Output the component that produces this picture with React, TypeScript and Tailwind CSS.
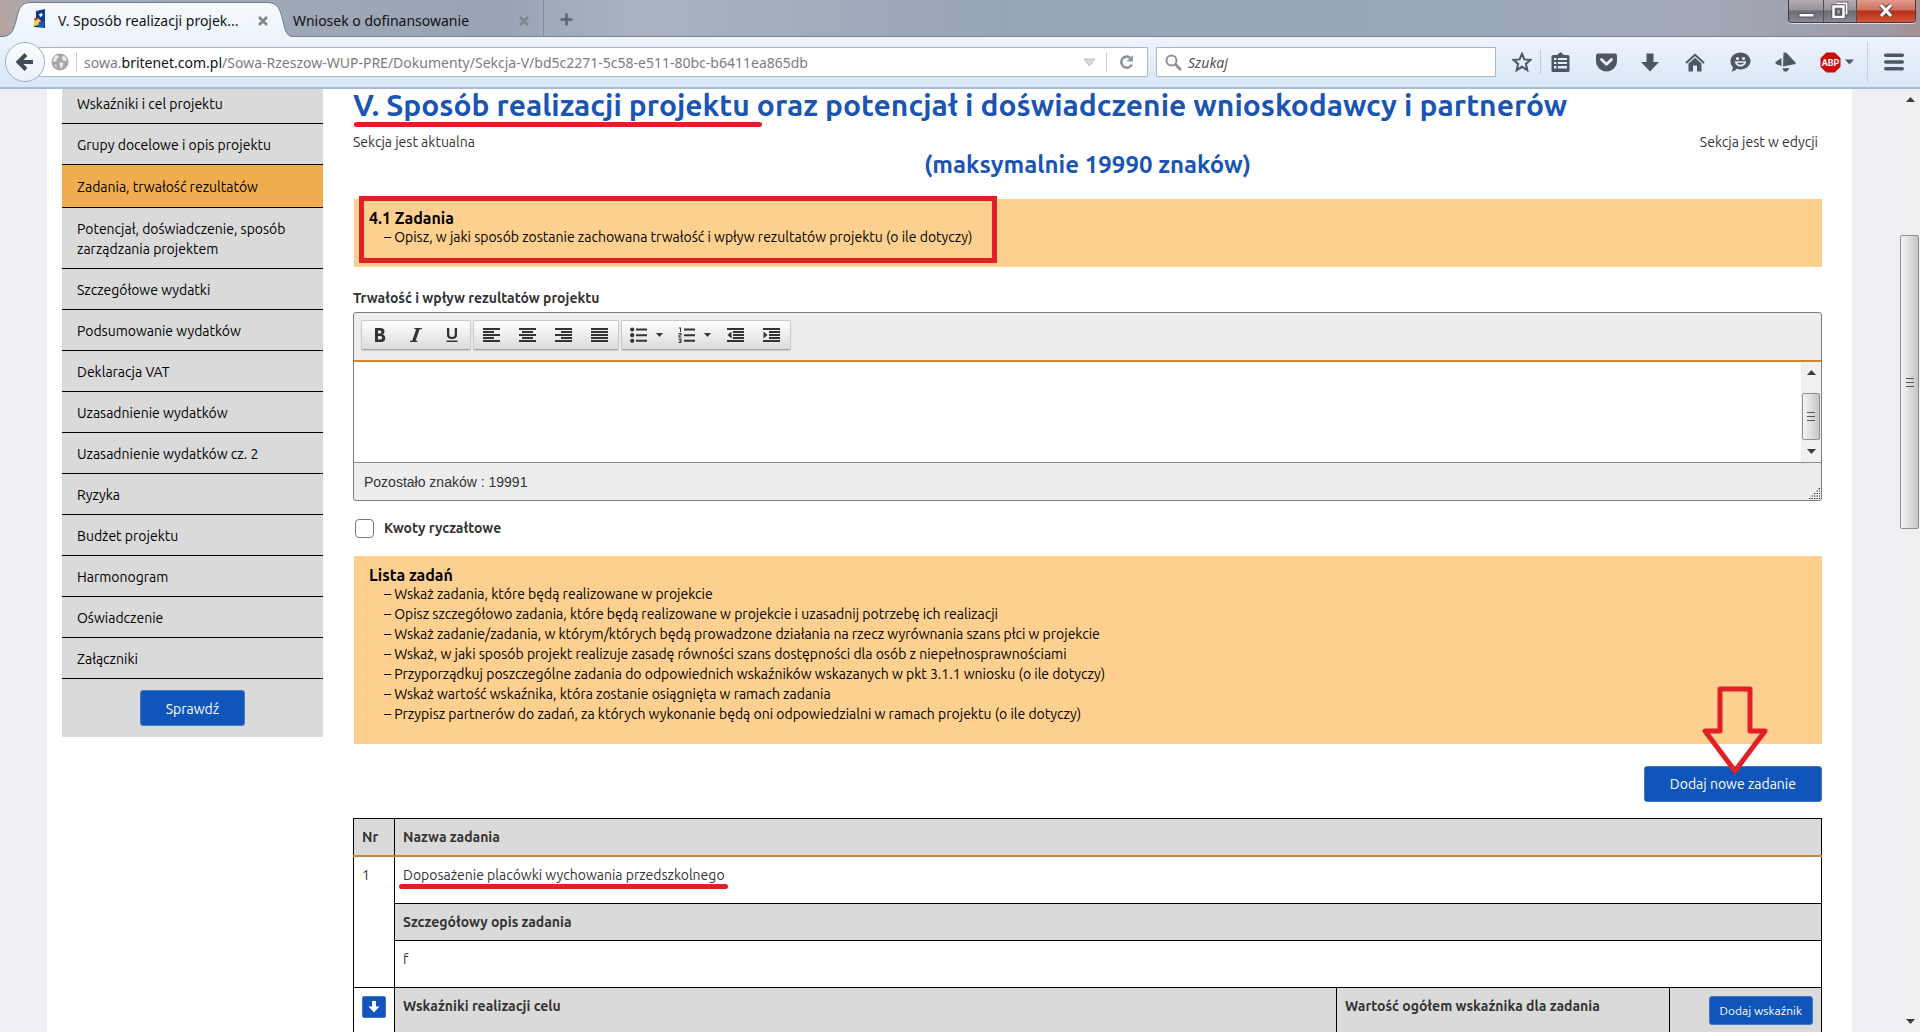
import { ReactNode } from "react";
import clsx from "clsx";

const menuItems = [
    "Wskaźniki i cel projektu",
    "Grupy docelowe i opis projektu",
    "Zadania, trwałość rezultatów",
    "Potencjał, doświadczenie, sposób zarządzania projektem",
    "Szczegółowe wydatki",
    "Podsumowanie wydatków",
    "Deklaracja VAT",
    "Uzasadnienie wydatków",
    "Uzasadnienie wydatków cz. 2",
    "Ryzyka",
    "Budżet projektu",
    "Harmonogram",
    "Oświadczenie",
    "Załączniki",
];
const activeItem = "Zadania, trwałość rezultatów";

const taskHints = [
    "Wskaż zadania, które będą realizowane w projekcie",
    "Opisz szczegółowo zadania, które będą realizowane w projekcie i uzasadnij potrzebę ich realizacji",
    "Wskaż zadanie/zadania, w którym/których będą prowadzone działania na rzecz wyrównania szans płci w projekcie",
    "Wskaż, w jaki sposób projekt realizuje zasadę równości szans dostępności dla osób z niepełnosprawnościami",
    "Przyporządkuj poszczególne zadania do odpowiednich wskaźników wskazanych w pkt 3.1.1 wniosku (o ile dotyczy)",
    "Wskaż wartość wskaźnika, która zostanie osiągnięta w ramach zadania",
    "Przypisz partnerów do zadań, za których wykonanie będą oni odpowiedzialni w ramach projektu (o ile dotyczy)",
];

/* ---------- przeglądarka ---------- */

function CloseIcon() {
    return (
        <svg width="10" height="10" viewBox="0 0 10 10" fill="none" stroke="#7d858e" strokeWidth="2.6">
            <path d="M1 1l8 8M9 1l-8 8" />
        </svg>
    );
}

function TabStrip() {
    return (
        <div className="flex h-[37px] bg-[linear-gradient(90deg,#b5a3a0_0,#a3abb9_60px,#98a4b6_500px,#a9b3c0_640px,#98a5b8_1000px,#9ba8ba_1500px,#a2aab8_88%,#9d9ba4_98%,#a58f91_100%)] shadow-[inset_0_-1px_0_#76829a]">
            <div className="relative flex w-[293px] items-center pl-[33px]">
                <svg className="absolute left-0 top-0" width="293" height="37" viewBox="0 0 293 37">
                    <defs>
                        <linearGradient id="tab" x1="0" y1="0" x2="0" y2="1">
                            <stop offset="0" stopColor="#f7fafe" />
                            <stop offset="1" stopColor="#edf4fc" />
                        </linearGradient>
                    </defs>
                    <path d="M0 37C11 37 13 32 16 21C19 9 20 2.500 31 2.500H267C278 2.500 280 9 283 21C285 31 287 36.500 293 36.500V37Z" fill="url(#tab)" />
                    <path d="M0 36.500C11 36.500 13 32 16 21C19 9 20 2.500 31 2.500H267C278 2.500 280 9 283 21C285 31 287 36.500 293 36.500" fill="none" stroke="#6d7a8f" />
                </svg>
                <svg className="relative" width="13" height="20" viewBox="0 0 13 20">
                    <path d="M3 2L12 0V19L1 18V11L3 10Z" fill="#14398c" />
                    <path d="M6 5L9 4L9.500 7L7 8Z" fill="#fff" />
                    <path d="M1 11L5 9L8 12L6 16L1 17Z" fill="#f2d23c" />
                    <path d="M1 9L6 9L2.500 12Z" fill="#d4273e" />
                    <path d="M6 13L11 12V18L5 18Z" fill="#1e56b8" />
                </svg>
                <span className="relative ml-3 w-[190px] truncate pt-1 text-sm leading-5 text-[#111]">V. Sposób realizacji projek...</span>
                <button aria-label="Zamknij kartę" className="relative ml-[10px] pt-1"><CloseIcon /></button>
            </div>
            <div className="flex w-[251px] items-center border-r border-[#818b9b] pt-1">
                <span className="w-[226px] text-sm leading-5 text-[#111]">Wniosek o dofinansowanie</span>
                <button aria-label="Zamknij kartę"><CloseIcon /></button>
            </div>
            <button aria-label="Nowa karta" className="ml-4 pt-[2px]">
                <svg width="13" height="13" viewBox="0 0 13 13" stroke="#5b6572" strokeWidth="2.600"><path d="M6.500 0.500v12M0.500 6.500h12" /></svg>
            </button>
            <div className="mr-1 ml-auto flex h-[23px] overflow-hidden rounded-b-[4px] border border-t-0 border-[#3a3d45] shadow-[0_1px_0_#d7dbe2]">
                <button aria-label="Minimalizuj" className="flex w-[35px] justify-center border-r border-[#4d4f57] bg-[linear-gradient(#b3acb1_0%,#97929a_45%,#6b6971_50%,#8b8891_100%)]">
                    <svg width="17" height="22" viewBox="0 0 17 22"><rect x="1" y="13.500" width="15" height="3.500" fill="#fff" stroke="#52555e" /></svg>
                </button>
                <button aria-label="Przywróć" className="flex w-[33px] justify-center border-r border-[#4d4f57] bg-[linear-gradient(#b3acb1_0%,#97929a_45%,#6b6971_50%,#8b8891_100%)]">
                    <svg width="20" height="22" viewBox="0 0 20 22" fill="none">
                        <path d="M7 3.500h9.500v10H14" stroke="#45484f" strokeWidth="3.500" />
                        <path d="M7 3.500h9.500v10H14" stroke="#fff" strokeWidth="2" />
                        <rect x="3.500" y="6.500" width="10" height="10.500" stroke="#45484f" strokeWidth="4" />
                        <rect x="3.500" y="6.500" width="10" height="10.500" stroke="#fff" strokeWidth="2.500" />
                        <rect x="6.500" y="9.500" width="4" height="4.500" fill="#9c9aa2" stroke="#55575f" />
                    </svg>
                </button>
                <button aria-label="Zamknij" className="flex w-[58px] justify-center bg-[linear-gradient(#e09a8c_0%,#d2705f_45%,#b8301a_50%,#d4523a_100%)]">
                    <svg width="18" height="22" viewBox="0 0 18 22" fill="none">
                        <path d="M4 5l10 11M14 5L4 16" stroke="#5f3a36" strokeWidth="5" />
                        <path d="M4 5l10 11M14 5L4 16" stroke="#fff" strokeWidth="3.200" />
                    </svg>
                </button>
            </div>
        </div>
    );
}

function ToolButton({ label, className, children }: { label: string; className?: string; children: ReactNode }) {
    return (
        <button aria-label={label} className={clsx("flex h-6 items-center justify-center text-[#4c5763]", className)}>
            {children}
        </button>
    );
}

function NavBar() {
    return (
        <div className="flex h-[52px] items-center border-b-2 border-[#a9bbd2] bg-linear-to-b from-[#edf4fc] to-[#d9e7f6]">
            <button aria-label="Wstecz" className="relative z-10 ml-[5px] flex size-10 items-center justify-center rounded-full border border-[#9fb0c6] bg-linear-to-b from-[#fbfdff] to-[#e9f1fa]">
                <svg width="20" height="20" viewBox="0 0 20 20" fill="none" stroke="#414b57" strokeWidth="4">
                    <path d="M18 10H5M11 2.500L3.500 10L11 17.500" />
                </svg>
            </button>
            <div className="-ml-[6px] flex h-[30px] w-[1109px] shrink items-center border border-[#a9b8cb] bg-white">
                <svg className="ml-[11px] shrink-0" width="18" height="18" viewBox="0 0 18 18">
                    <circle cx="9" cy="9" r="8.500" fill="#a5a7aa" />
                    <path d="M4 3C6 1.500 8 2 7.500 4S5 5 5.500 7S3 9 1.500 8Z" fill="#e9eaec" />
                    <path d="M12 2.500C14 3 15.500 5.500 16 7.500L12.500 8L11 5Z" fill="#e9eaec" />
                    <path d="M8.500 10C10 8.500 12 9.500 12.500 11L10.500 15.500L9 14Z" fill="#e9eaec" />
                    <path d="M3 11.500L5.500 12L5.500 14.500Z" fill="#e9eaec" />
                </svg>
                <div className="ml-[7px] h-5 w-px bg-[#c9ccd1]" />
                <a href="#adres" className="ml-[7px] flex-1 pt-[2px] text-sm leading-5 whitespace-nowrap text-[#7c7c7c]">
                    sowa.<span className="text-[#111]">britenet.com.pl</span>/Sowa-Rzeszow-WUP-PRE/Dokumenty/Sekcja-V/bd5c2271-5c58-e511-80bc-b6411ea865db
                </a>
                <button aria-label="Historia adresów" className="mr-[10px]">
                    <svg width="13" height="9" viewBox="0 0 13 9"><path d="M1 1h11L6.500 8Z" fill="#d7d9dc" stroke="#b9bcc0" /></svg>
                </button>
                <div className="h-5 w-px bg-[#c9ccd1]" />
                <button aria-label="Odśwież" className="mx-3">
                    <svg width="16" height="16" viewBox="0 0 16 16" fill="none" stroke="#8f959b" strokeWidth="2.600">
                        <path d="M12.800 10.500A5.500 5.500 0 1 1 11.500 4" />
                        <path d="M14 1v6.500H7.500Z" fill="#8f959b" stroke="none" />
                    </svg>
                </button>
            </div>
            <label className="ml-2 flex h-[30px] w-[340px] items-center border border-[#a9b8cb] bg-white">
                <svg className="mr-[6px] ml-2 shrink-0" width="17" height="17" viewBox="0 0 17 17" fill="none" stroke="#8d9299" strokeWidth="2">
                    <circle cx="6.500" cy="6.500" r="5" />
                    <path d="M10 10l6 6" strokeWidth="3" />
                </svg>
                <input aria-label="Szukaj" placeholder="Szukaj" className="min-w-0 flex-1 pt-[2px] text-sm italic outline-none placeholder:text-[#555]" />
            </label>
            <div className="ml-auto flex shrink-0 items-center">
                <ToolButton label="Dodaj zakładkę" className="mr-2 w-5">
                    <svg width="20" height="20" viewBox="0 0 20 20" fill="none" stroke="currentColor" strokeWidth="2">
                        <path d="M10 1.800L12.400 7.400L18.500 7.900L13.900 11.900L15.300 18.200L10 14.800L4.700 18.200L6.100 11.900L1.500 7.900L7.600 7.400Z" />
                    </svg>
                </ToolButton>
                <div className="h-6 w-px bg-[#bcc8d6]" />
                <ToolButton label="Zakładki" className="mr-[26px] ml-[9px] w-5">
                    <svg width="19" height="20" viewBox="0 0 19 20" fill="currentColor">
                        <path fillRule="evenodd" d="M6 3L9.500 0L13 3H17Q18.500 3 18.500 4.500V18.500Q18.500 20 17 20H2Q0.500 20 0.500 18.500V4.500Q0.500 3 2 3ZM3 6v2h2.500v-2ZM7 6v2h9v-2ZM3 10v2h2.500v-2ZM7 10v2h9v-2ZM3 14v2.500h2.500V14ZM7 14v2.500h9V14Z" />
                    </svg>
                </ToolButton>
                <ToolButton label="Pocket" className="mr-6 w-[21px]">
                    <svg width="21" height="19" viewBox="0 0 21 19">
                        <path d="M2 0.500H19Q21 0.500 21 2.500V8.500A10.500 10 0 0 1 0 8.500V2.500Q0 0.500 2 0.500Z" fill="currentColor" />
                        <path d="M5.500 6.500L10.500 11.300L15.500 6.500" fill="none" stroke="#eaf1f9" strokeWidth="2.800" strokeLinecap="round" strokeLinejoin="round" />
                    </svg>
                </ToolButton>
                <ToolButton label="Pobrane" className="mr-[26px] w-[18px]">
                    <svg width="18" height="19" viewBox="0 0 18 19" fill="currentColor"><path d="M5.500 0.500H12.500V9H18L9 18.500L0 9H5.500Z" /></svg>
                </ToolButton>
                <ToolButton label="Strona startowa" className="mr-[25px] w-5">
                    <svg width="20" height="19" viewBox="0 0 20 19">
                        <path d="M1 10L10 1.800L19 10" fill="none" stroke="currentColor" strokeWidth="2" />
                        <path d="M3.500 10.500L10 4.700L16.500 10.500V18.500H12V12.500H8V18.500H3.500Z" fill="currentColor" />
                    </svg>
                </ToolButton>
                <ToolButton label="Hello" className="mr-[23px] w-[21px]">
                    <svg width="21" height="20" viewBox="0 0 21 20">
                        <path d="M10.500 0.500C16 0.500 20.500 4.200 20.500 9S16 17.500 10.500 17.500C9 17.500 7.500 17.200 6.500 16.800C5.500 18.500 3.500 19.500 1.500 19.500C2.500 18 2.800 16.500 2.800 15C1.200 13.500 0.500 11.400 0.500 9C0.500 4.200 5 0.500 10.500 0.500Z" fill="currentColor" />
                        <circle cx="7.500" cy="6.500" r="1.600" fill="#eaf1f9" />
                        <circle cx="13.500" cy="6.500" r="1.600" fill="#eaf1f9" />
                        <path d="M4.800 9.300H16.200C15.500 13 13.300 14.500 10.500 14.500S5.500 13 4.800 9.300Z" fill="#eaf1f9" />
                        <path d="M7 10.800H14C13.200 12.300 12 12.600 10.500 12.600S7.800 12.300 7 10.800Z" fill="currentColor" />
                    </svg>
                </ToolButton>
                <ToolButton label="Dodatek" className="mr-6 w-[22px]">
                    <svg width="21" height="20" viewBox="0 0 21 20" fill="currentColor">
                        <path d="M8.500 0.500Q10.500 0 12 1.500L20.500 10.500V12L8 14.500Z" />
                        <path d="M6.500 6V14L2 12.500Q0 11.500 0.500 10Z" />
                        <path d="M7 16.500L14.500 16L12.500 19Q10.500 20.500 9 19Z" />
                    </svg>
                </ToolButton>
                <ToolButton label="Adblock Plus" className="mr-[13px] w-[34px] gap-1">
                    <svg width="21" height="21" viewBox="0 0 21 21">
                        <path d="M6.300 0.500H14.700L20.500 6.300V14.700L14.700 20.500H6.300L0.500 14.700V6.300Z" fill="#cf0a0a" />
                        <text x="10.500" y="14" textAnchor="middle" fontSize="9" fontWeight="700" fill="#fff" fontFamily="Roboto, sans-serif">ABP</text>
                    </svg>
                    <svg width="9" height="6" viewBox="0 0 9 6" fill="currentColor"><path d="M0 0.500h9L4.500 5.500Z" /></svg>
                </ToolButton>
                <div className="h-10 w-px bg-[#c5d2e2]" />
                <ToolButton label="Menu" className="mr-4 ml-4 w-5">
                    <svg width="20" height="18" viewBox="0 0 20 18" fill="currentColor">
                        <rect y="0.500" width="20" height="3.400" rx="1.700" />
                        <rect y="7.300" width="20" height="3.400" rx="1.700" />
                        <rect y="14.100" width="20" height="3.400" rx="1.700" />
                    </svg>
                </ToolButton>
            </div>
        </div>
    );
}

function ScrollArrow({ down }: { down?: boolean }) {
    return (
        <svg width="9" height="5" viewBox="0 0 9 5" fill="#3c3c3c">
            {down ? <path d="M0 0h9L4.500 5Z" /> : <path d="M0 5h9L4.500 0Z" />}
        </svg>
    );
}

function ScrollThumb({ className }: { className: string }) {
    return (
        <div className={clsx("flex flex-col items-center justify-center gap-[3px] rounded-[2px] border border-[#8f8f8f] bg-linear-to-r from-[#f5f5f5] via-[#dedede] to-[#c4c4c6]", className)}>
            <div className="h-px w-2 bg-[#555]" />
            <div className="h-px w-2 bg-[#555]" />
            <div className="h-px w-2 bg-[#555]" />
        </div>
    );
}

/* ---------- strona ---------- */

function Sidebar() {
    return (
        <aside className="-mt-[6px] w-[261px] shrink-0 self-start bg-[#dadada]">
            <nav>
                {menuItems.map((item) => (
                    <a
                        key={item}
                        href="#sekcja"
                        className={clsx(
                            "block border-b border-black px-[15px] text-sm leading-5 text-black",
                            item === activeItem ? "bg-[#f0ad4e] pt-3 pb-[10px]" : "pt-[11px] pb-[9px]"
                        )}
                    >
                        {item}
                    </a>
                ))}
            </nav>
            <div className="flex justify-center py-[11px]">
                <BlueButton className="h-9 px-[25px] pt-px text-sm">Sprawdź</BlueButton>
            </div>
        </aside>
    );
}

function BlueButton({ className, children }: { className: string; children: ReactNode }) {
    return (
        <button className={clsx("rounded-[3px] border border-[#3f78cc] bg-[#1155bb] text-white", className)}>{children}</button>
    );
}

function InfoBox({ title, hints, children }: { title: string; hints: string[]; children?: ReactNode }) {
    return (
        <div className="relative ml-px bg-[#fdd08f] px-[15px] pt-[11px] pb-5 text-black">
            <h3 className="text-base leading-4 font-bold">{title}</h3>
            <ul className="pt-px pl-[15px] text-sm leading-5">
                {hints.map((hint) => (
                    <li key={hint}>– {hint}</li>
                ))}
            </ul>
            {children}
        </div>
    );
}

function EditorGroup({ children }: { children: ReactNode }) {
    return (
        <div className="flex h-[30px] rounded-[2px] border border-[#c9c9c9] border-b-[#a8a8a8] bg-linear-to-b from-white to-[#dcdcdc] shadow-[0_1px_1px_rgba(0,0,0,0.15)]">
            {children}
        </div>
    );
}

function EditorButton({ label, wide, children }: { label: string; wide?: boolean; children: ReactNode }) {
    return (
        <button aria-label={label} className={clsx("flex items-center justify-center gap-2", wide ? "w-12" : "w-9")}>
            <svg width="18" height="16" viewBox="0 0 18 16" fill="#333">{children}</svg>
            {wide && <svg width="7" height="4" viewBox="0 0 7 4" fill="#333"><path d="M0 0h7L3.500 4Z" /></svg>}
        </button>
    );
}

// x i szerokość kolejnych linii ikony wyrównania
function Lines({ rows }: { rows: number[][] }) {
    return (
        <>
            {rows.map(([x, w], i) => (
                <rect key={i} x={x} y={1 + i * 3} width={w} height="2" />
            ))}
        </>
    );
}

function Editor() {
    return (
        <div className="mt-1 rounded-[3px] border border-[#7d7d7d] bg-[#ededed]">
            <div className="flex gap-[2px] border-b-2 border-[#d5842a] px-[7px] pt-[7px] pb-[10px]">
                <EditorGroup>
                    <EditorButton label="Pogrubienie">
                        <path fillRule="evenodd" d="M4 1H9.500Q13.500 1 13.500 4.600Q13.500 6.700 11.800 7.500Q14.300 8.200 14.300 10.900Q14.300 15 9.800 15H4ZM7 3.400V6.600H8.700Q10.500 6.600 10.500 5Q10.500 3.400 8.700 3.400ZM7 8.900V12.600H9Q11.200 12.600 11.200 10.700Q11.200 8.900 9 8.900Z" />
                    </EditorButton>
                    <EditorButton label="Kursywa">
                        <path d="M7.500 1H15L14.600 2.300H12.600L8.600 13.700H10.600L10.200 15H2.800L3.200 13.700H5.200L9.200 2.300H7.100Z" />
                    </EditorButton>
                    <EditorButton label="Podkreślenie">
                        <path d="M4 1H6.300V7.500Q6.300 10 9 10T11.700 7.500V1H14V7.700Q14 12 9 12T4 7.700ZM3.500 13.500H14.500V15H3.500Z" />
                    </EditorButton>
                </EditorGroup>
                <EditorGroup>
                    <EditorButton label="Do lewej"><Lines rows={[[0, 17], [0, 11], [0, 17], [0, 11], [0, 17]]} /></EditorButton>
                    <EditorButton label="Do środka"><Lines rows={[[0, 17], [3, 11], [0, 17], [3, 11], [0, 17]]} /></EditorButton>
                    <EditorButton label="Do prawej"><Lines rows={[[0, 17], [6, 11], [0, 17], [6, 11], [0, 17]]} /></EditorButton>
                    <EditorButton label="Wyjustuj"><Lines rows={[[0, 17], [0, 17], [0, 17], [0, 17], [0, 17]]} /></EditorButton>
                </EditorGroup>
                <EditorGroup>
                    <EditorButton label="Lista punktowana" wide>
                        <circle cx="2.200" cy="2.500" r="2.100" /><circle cx="2.200" cy="8.200" r="2.100" /><circle cx="2.200" cy="13.800" r="2.100" />
                        <path d="M6 1.500H17V3.500H6ZM6 7.200H17V9.200H6ZM6 12.800H17V14.800H6Z" />
                    </EditorButton>
                    <EditorButton label="Lista numerowana" wide>
                        <path d="M1 0.500H3V5H2V1.500H1ZM0.500 6H3.500V8.500H1.500V9.500H3.500V10.500H0.500V7.800H2.500V7H0.500ZM0.500 11.500H3.500V16H0.500V15H2.500V14.200H1V13.300H2.500V12.500H0.500Z" />
                        <path d="M6 1.500H17V3.500H6ZM6 7.200H17V9.200H6ZM6 12.800H17V14.800H6Z" />
                    </EditorButton>
                    <EditorButton label="Zmniejsz wcięcie">
                        <Lines rows={[[0, 17], [6, 11], [6, 11], [6, 11], [0, 17]]} />
                        <path d="M4.500 4.500V11.500L0.500 8Z" />
                    </EditorButton>
                    <EditorButton label="Zwiększ wcięcie">
                        <Lines rows={[[0, 17], [6, 11], [6, 11], [6, 11], [0, 17]]} />
                        <path d="M0.500 4.500V11.500L4.500 8Z" />
                    </EditorButton>
                </EditorGroup>
            </div>
            <div className="flex h-[100px] bg-white">
                <textarea id="trwalosc" className="flex-1 resize-none outline-none" />
                <div className="flex w-5 flex-col items-center bg-[#f0f0f0] pt-2 pb-2">
                    <ScrollArrow />
                    <ScrollThumb className="mt-[18px] mb-auto h-[47px] w-[18px]" />
                    <ScrollArrow down />
                </div>
            </div>
            <div className="flex items-end justify-between border-t border-[#8c8c8c] pl-[10px] text-[#333]">
                <span className="pt-[9px] pb-2 font-['Liberation_Sans',Arial,sans-serif] text-sm leading-5">Pozostało znaków : 19991</span>
                <svg className="m-px" width="11" height="11" viewBox="0 0 11 11" stroke="#444" strokeWidth="1.200" strokeDasharray="1.500 1">
                    <path d="M0 10.500H11M2.500 8H11M5 5.500H11M7.500 3H11M9.500 0.600H11" />
                </svg>
            </div>
        </div>
    );
}

function TaskTable() {
    const cell = "border border-black px-2 text-left align-top";
    return (
        <table className="mt-4 w-full border-collapse text-sm leading-5 text-[#333]">
            <thead>
                <tr className="bg-[#dadada]">
                    <th className={clsx(cell, "w-[41px] border-b-2 border-b-[#c4883c] pt-2 pb-2")}>Nr</th>
                    <th colSpan={3} className={clsx(cell, "border-b-2 border-b-[#c4883c] pt-2 pb-2")}>Nazwa zadania</th>
                </tr>
            </thead>
            <tbody>
                <tr>
                    <td rowSpan={3} className={clsx(cell, "pt-2")}>1</td>
                    <td colSpan={3} className={clsx(cell, "pt-2 pb-[18px]")}>
                        <span className="relative">
                            Doposażenie placówki wychowania przedszkolnego
                            <span className="absolute -right-[3px] -bottom-[6px] -left-1 h-[5px] rounded-full bg-[#e01f26]" />
                        </span>
                    </td>
                </tr>
                <tr className="bg-[#dadada]">
                    <th colSpan={3} className={clsx(cell, "pt-2 pb-2")}>Szczegółowy opis zadania</th>
                </tr>
                <tr>
                    <td colSpan={3} className={clsx(cell, "pt-2 pb-[18px]")}>f</td>
                </tr>
                <tr>
                    <td className={clsx(cell, "pt-2")}>
                        <button aria-label="Rozwiń" className="flex h-[22px] w-6 items-center justify-center rounded-[2px] border border-[#3f78cc] bg-[#1155bb]">
                            <svg width="12" height="14" viewBox="0 0 12 14" fill="#fff"><path d="M4 1H8V6.500H11.500L6 12.500L0.500 6.500H4Z" /></svg>
                        </button>
                    </td>
                    <th className={clsx(cell, "bg-[#dadada] pt-2 pb-8")}>Wskaźniki realizacji celu</th>
                    <th className={clsx(cell, "w-[333px] bg-[#dadada] pt-2")}>Wartość ogółem wskaźnika dla zadania</th>
                    <th className={clsx(cell, "w-[152px] bg-[#dadada] pt-2")}>
                        <BlueButton className="ml-auto block h-[29px] px-[10px] pt-px text-xs font-normal">Dodaj wskaźnik</BlueButton>
                    </th>
                </tr>
            </tbody>
        </table>
    );
}

export default function App() {
    return (
        <div className="flex h-screen flex-col overflow-hidden bg-white">
            <header className="z-10 shrink-0 [font-family:'Noto_Sans',sans-serif]">
                <TabStrip />
                <NavBar />
            </header>
            <div className="flex min-h-0 flex-1 [font-family:Ubuntu,'Noto_Sans',sans-serif]">
                <div className="min-w-0 flex-1 overflow-hidden bg-[#eff0f5] pr-12 pl-[47px]">
                    <div className="flex min-h-full bg-white pr-[30px] pl-[15px]">
                        <Sidebar />
                        <main className="-mt-[2px] ml-[30px] min-w-0 flex-1">
                            <h1 className="text-3xl leading-9 font-bold whitespace-nowrap text-[#1b55b4]">
                                <span className="relative">
                                    V. Sposób realizacji projektu
                                    <span className="absolute -right-3 -bottom-[5px] left-px h-[5px] rounded-full bg-[#e01f26]" />
                                </span>{" "}
                                oraz potencjał i doświadczenie wnioskodawcy i partnerów
                            </h1>
                            <div className="mt-[10px] flex justify-between pr-1 text-sm leading-[18px] text-[#333]">
                                <span>Sekcja jest aktualna</span>
                                <span>Sekcja jest w edycji</span>
                            </div>
                            <h2 className="mb-5 text-center text-2xl leading-7 font-bold text-[#1b55b4]">(maksymalnie 19990 znaków)</h2>

                            <InfoBox
                                title="4.1 Zadania"
                                hints={["Opisz, w jaki sposób zostanie zachowana trwałość i wpływ rezultatów projektu (o ile dotyczy)"]}
                            >
                                <div className="absolute -top-[3px] bottom-1 left-[5px] w-[638px] border-[5px] border-[#e01f26]" />
                            </InfoBox>

                            <label htmlFor="trwalosc" className="mt-[21px] block text-sm leading-5 font-bold text-[#333]">Trwałość i wpływ rezultatów projektu</label>
                            <Editor />

                            <label className="mt-[17px] mb-[18px] ml-[2px] flex items-center gap-[10px] text-sm leading-5 font-bold text-[#333]">
                                <input type="checkbox" className="size-[19px] appearance-none rounded-[4px] border border-[#777] bg-white" />
                                Kwoty ryczałtowe
                            </label>

                            <InfoBox title="Lista zadań" hints={taskHints} />

                            <div className="relative mt-[22px] flex justify-end">
                                <BlueButton className="h-9 px-[25px] text-sm">Dodaj nowe zadanie</BlueButton>
                                <svg className="pointer-events-none absolute right-[52px] bottom-[26px]" width="70" height="92" viewBox="0 0 70 92" fill="none" stroke="#e01f26" strokeWidth="5" strokeLinejoin="round">
                                    <path d="M20 5H50V47H65L35 87L5 47H20Z" />
                                </svg>
                            </div>

                            <TaskTable />
                        </main>
                    </div>
                </div>
                <div className="relative flex w-5 shrink-0 flex-col items-center justify-between bg-[#f0f0f0] py-2">
                    <ScrollArrow />
                    <ScrollThumb className="absolute top-[146px] left-0 h-[294px] w-[19px]" />
                    <ScrollArrow down />
                </div>
            </div>
        </div>
    );
}
